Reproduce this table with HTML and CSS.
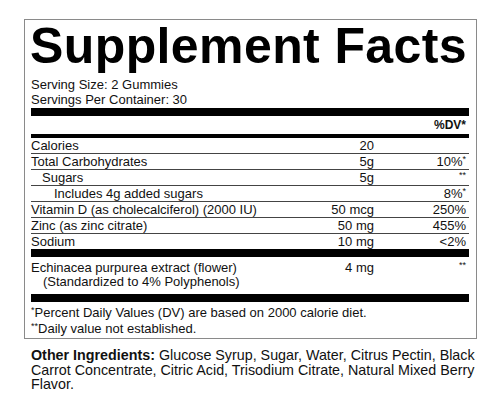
FILE: index.html
```html
<!DOCTYPE html>
<html lang="en">
<head>
    <meta charset="UTF-8">
    <meta name="viewport" content="width=device-width, initial-scale=1.0">
    <title>Supplement Facts</title>
    <link rel="stylesheet" href="styles.css">
</head>
<body>
    <div class="label">
        <h1>Supplement Facts</h1>
        <div class="serving">
            <p>Serving Size: 2 Gummies</p>
            <p>Servings Per Container: 30</p>
        </div>
        <div class="bar thick"></div>
        <div class="dv-head">%DV*</div>
        <div class="bar medium"></div>

        <div class="rows">
            <div class="row">
                <span class="name">Calories</span>
                <span class="amt">20</span>
                <span class="dv"></span>
            </div>
            <div class="row">
                <span class="name">Total Carbohydrates</span>
                <span class="amt">5g</span>
                <span class="dv">10%<sup>*</sup></span>
            </div>
            <div class="row">
                <span class="name indent1">Sugars</span>
                <span class="amt">5g</span>
                <span class="dv"><sup>**</sup></span>
            </div>
            <div class="row">
                <span class="name indent2">Includes 4g added sugars</span>
                <span class="amt"></span>
                <span class="dv">8%<sup>*</sup></span>
            </div>
            <div class="row">
                <span class="name">Vitamin D (as cholecalciferol) (2000 IU)</span>
                <span class="amt">50 mcg</span>
                <span class="dv">250%</span>
            </div>
            <div class="row">
                <span class="name">Zinc (as zinc citrate)</span>
                <span class="amt">50 mg</span>
                <span class="dv">455%</span>
            </div>
            <div class="row">
                <span class="name">Sodium</span>
                <span class="amt">10 mg</span>
                <span class="dv">&lt;2%</span>
            </div>
        </div>

        <div class="bar thick"></div>

        <div class="row extract">
            <span class="name">Echinacea purpurea extract (flower)<br><span class="sub">(Standardized to 4% Polyphenols)</span></span>
            <span class="amt">4 mg</span>
            <span class="dv"><sup>**</sup></span>
        </div>

        <div class="bar thick"></div>

        <div class="notes">
            <p><sup>*</sup>Percent Daily Values (DV) are based on 2000 calorie diet.</p>
            <p><sup>**</sup>Daily value not established.</p>
        </div>
    </div>

    <p class="ingredients"><b>Other Ingredients:</b> Glucose Syrup, Sugar, Water, Citrus Pectin, Black Carrot Concentrate, Citric Acid, Trisodium Citrate, Natural Mixed Berry Flavor.</p>
</body>
</html>
```

FILE: styles.css
```css
* {
    box-sizing: border-box;
    margin: 0;
    padding: 0;
}

body {
    font-family: 'Liberation Sans', Arial, sans-serif;
    background: #fff;
    color: #111;
    font-size: 13px;
}

.label {
    width: 453px;
    margin: 19px 0 0 24px;
    padding: 1px 7px 1px 6px;
    border: 1px solid #8a8a8a;
}

h1 {
    font-size: 50px;
    font-weight: 700;
    line-height: 50px;
    letter-spacing: 0.4px;
    color: #000;
    margin-left: -1px;
}

.serving {
    margin-top: 6px;
    line-height: 15px;
}

.bar {
    background: #000;
}

.bar.thick {
    height: 8px;
}

.bar.medium {
    height: 4px;
}

.serving + .bar {
    margin-top: 1px;
}

.dv-head {
    text-align: right;
    font-size: 12px;
    font-weight: 700;
    line-height: 18px;
    padding-right: 3px;
}

.row {
    display: grid;
    grid-template-columns: 1fr 80px 95px;
    line-height: 15px;
}

.rows .row {
    border-bottom: 1px solid #444;
}

.rows .row:last-child {
    border-bottom: none;
}

.amt {
    text-align: right;
}

.dv {
    text-align: right;
    padding-right: 3px;
}

.indent1 {
    padding-left: 11px;
}

.indent2 {
    padding-left: 23px;
}

sup {
    font-size: 9px;
    line-height: 0;
    vertical-align: 4px;
}

.row.extract {
    line-height: 14px;
    padding: 4px 0 5px;
}

.sub {
    padding-left: 12px;
}

.notes {
    padding-top: 3px;
    line-height: 16px;
}

.ingredients {
    width: 455px;
    margin: 9px 0 0 31px;
    font-size: 14.3px;
    line-height: 14.5px;
}
```
